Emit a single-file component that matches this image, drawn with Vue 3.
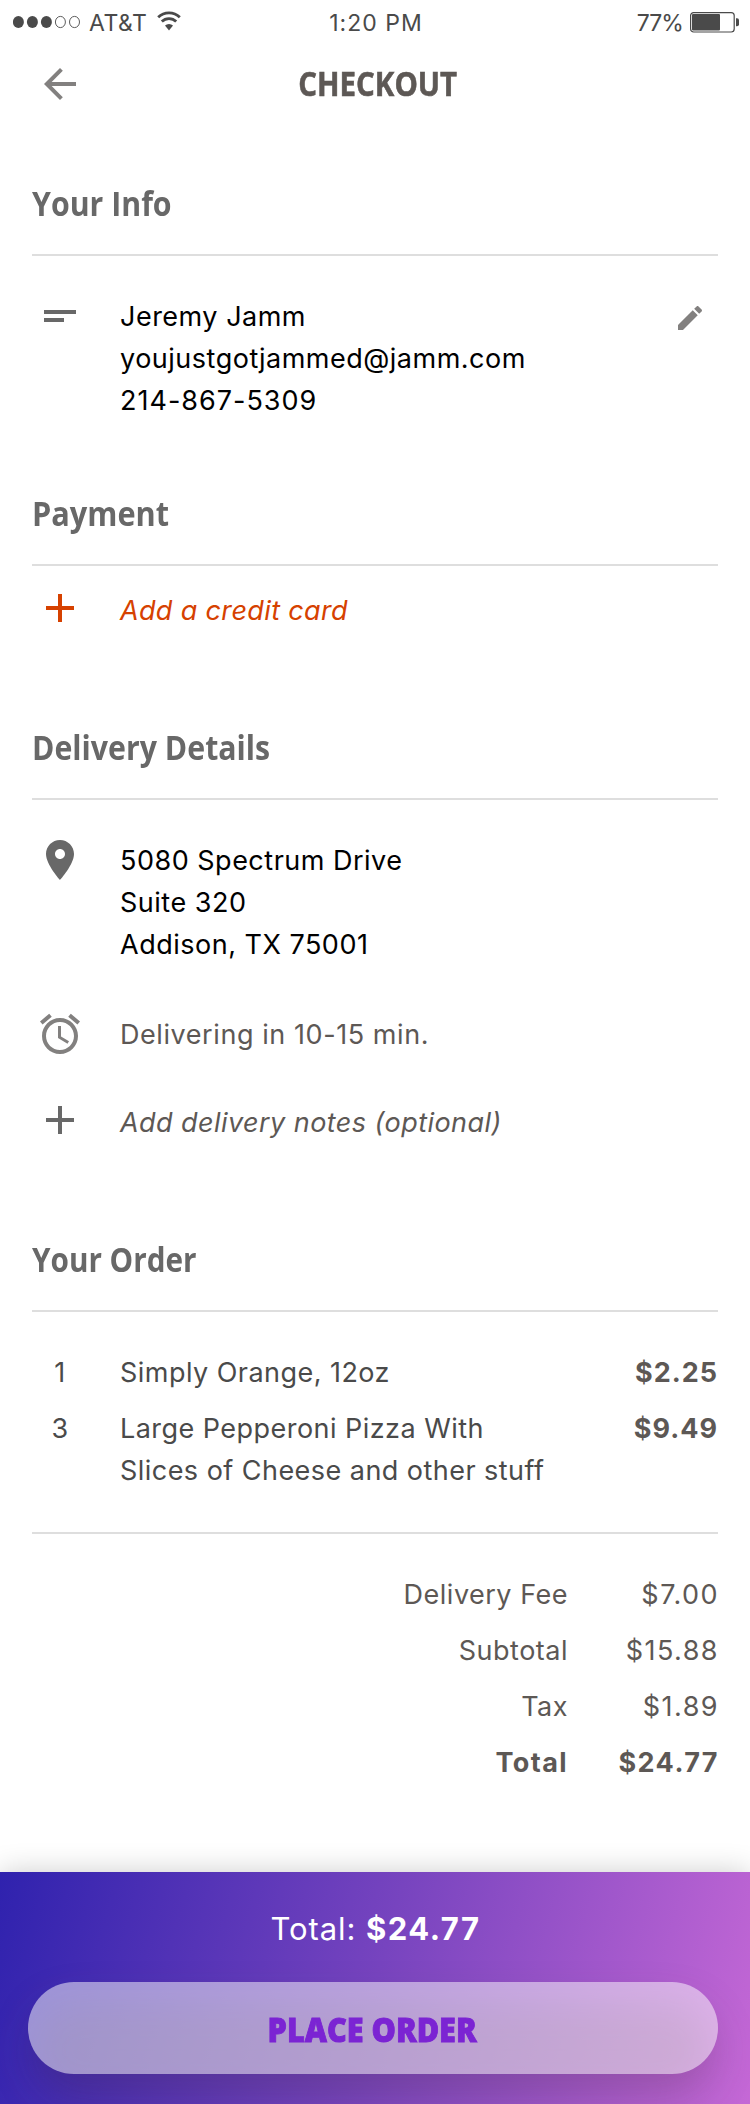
<script setup>
const address = ['5080 Spectrum Drive', 'Suite 320', 'Addison, TX 75001']
const items = [
  { qty: 1, lines: ['Simply Orange, 12oz'], price: '$2.25' },
  { qty: 3, lines: ['Large Pepperoni Pizza With', 'Slices of Cheese and other stuff'], price: '$9.49' },
]
const totals = [
  { label: 'Delivery Fee', amount: '$7.00' },
  { label: 'Subtotal', amount: '$15.88' },
  { label: 'Tax', amount: '$1.89' },
  { label: 'Total', amount: '$24.77', strong: true },
]
</script>

<template>
  <main class="screen">
    <div class="status">
      <div class="carrier">
        <svg class="signal" width="67" height="14" viewBox="0 0 67 14">
          <g fill="#4a4a4a">
            <ellipse cx="5.4" cy="7" rx="5.5" ry="6" /><ellipse cx="19.4" cy="7" rx="5.5" ry="6" /><ellipse cx="33.4" cy="7" rx="5.5" ry="6" />
          </g>
          <g fill="none" stroke="#4a4a4a" stroke-width="0.9">
            <ellipse cx="47.4" cy="7" rx="5" ry="5.6" /><ellipse cx="61.5" cy="7" rx="5" ry="5.6" />
          </g>
        </svg>
        <span>AT&amp;T</span>
        <svg class="wifi" width="24" height="20" viewBox="0 0 24 20">
          <g fill="none" stroke="#4a4a4a" stroke-width="2.8">
            <path d="M1.2 6.3a15.3 15.3 0 0 1 21.6 0" /><path d="M4.8 10.6a10.2 10.2 0 0 1 14.4 0" />
          </g>
          <path fill="#4a4a4a" d="M8 14.6a5.8 5.8 0 0 1 8 0L12 19.4z" />
        </svg>
      </div>
      <span class="clock">1:20 PM</span>
      <div class="power">
        <span class="percent">77%</span>
        <svg width="50" height="21" viewBox="0 0 50 21">
          <rect x="1.6" y="0.6" width="43.6" height="19.4" rx="3" fill="none" stroke="#4a4a4a" stroke-width="1.2" />
          <rect x="3" y="2" width="28" height="16.4" rx="1" fill="#4a4a4a" />
          <path d="M47 6.3h1a2 2 0 0 1 2 2v4a2 2 0 0 1-2 2h-1z" fill="#4a4a4a" />
        </svg>
      </div>
    </div>

    <header class="nav">
      <svg class="icon light" viewBox="0 0 24 24"><path d="M20 11H7.83l5.59-5.59L12 4l-8 8 8 8 1.41-1.41L7.83 13H20v-2z" /></svg>
      <h1><span>CHECKOUT</span></h1>
    </header>

    <section class="info">
      <h2><span>Your Info</span></h2>
      <div class="row">
        <svg class="icon" viewBox="0 0 24 24"><path d="M4 9h16v2H4V9zm0 4h10v2H4v-2z" /></svg>
        <div class="text dark"><p>Jeremy Jamm</p><p>youjustgotjammed@jamm.com</p><p class="phone">214-867-5309</p></div>
        <svg class="edit" viewBox="0 0 24 24"><path d="M3 17.25V21h3.75L17.81 9.94l-3.75-3.75L3 17.25zM20.71 7.04c.39-.39.39-1.02 0-1.41l-2.34-2.34c-.39-.39-1.02-.39-1.41 0l-1.83 1.83 3.75 3.75 1.83-1.83z" /></svg>
      </div>
    </section>

    <section class="payment">
      <h2><span>Payment</span></h2>
      <div class="row add">
        <svg class="icon plus" viewBox="0 0 24 24"><path d="M19 13h-6v6h-2v-6H5v-2h6V5h2v6h6v2z" /></svg>
        <p class="text">Add a credit card</p>
      </div>
    </section>

    <section class="delivery">
      <h2><span>Delivery Details</span></h2>
      <div class="row">
        <svg class="icon" viewBox="0 0 24 24"><path d="M12 2C8.13 2 5 5.13 5 9c0 5.25 7 13 7 13s7-7.75 7-13c0-3.87-3.13-7-7-7zm0 9.5c-1.38 0-2.5-1.12-2.5-2.5s1.12-2.5 2.5-2.5 2.5 1.12 2.5 2.5-1.12 2.5-2.5 2.5z" /></svg>
        <div class="text dark"><p v-for="line in address" :key="line">{{ line }}</p></div>
      </div>
      <div class="row eta">
        <svg class="icon light" viewBox="0 0 24 24"><path d="M22 5.72l-4.6-3.86-1.29 1.53 4.6 3.86L22 5.72zM7.88 3.39L6.6 1.86 2 5.71l1.29 1.53 4.59-3.85zM12.5 8H11v6l4.75 2.85.75-1.23-4-2.37V8zM12 4c-4.97 0-9 4.03-9 9s4.02 9 9 9 9-4.03 9-9-4.03-9-9-9zm0 16c-3.87 0-7-3.13-7-7s3.13-7 7-7 7 3.13 7 7-3.13 7-7 7z" /></svg>
        <p class="text">Delivering in 10-15 min.</p>
      </div>
      <div class="row notes">
        <svg class="icon plus" viewBox="0 0 24 24"><path d="M19 13h-6v6h-2v-6H5v-2h6V5h2v6h6v2z" /></svg>
        <p class="text">Add delivery notes (optional)</p>
      </div>
    </section>

    <section class="order">
      <h2 class="tight"><span>Your Order</span></h2>
      <ul class="items">
        <li v-for="item in items" :key="item.price" class="row">
          <span class="qty">{{ item.qty }}</span>
          <div class="text"><p v-for="line in item.lines" :key="line">{{ line }}</p></div>
          <strong class="price">{{ item.price }}</strong>
        </li>
      </ul>
      <dl class="totals">
        <div v-for="t in totals" :key="t.label" :class="{ strong: t.strong }">
          <dt>{{ t.label }}</dt><dd>{{ t.amount }}</dd>
        </div>
      </dl>
    </section>

    <footer class="bar">
      <p class="due">Total: <strong>$24.77</strong></p>
      <button class="place" type="button"><span>PLACE ORDER</span></button>
    </footer>
  </main>
</template>

<style>
html, body { background: #fff; }
</style>

<style scoped>
.screen { display: flex; flex-direction: column; width: 750px; height: 2104px; overflow: hidden; background: #fff; color: #5d5855; font: 400 27px/42px Inter, "Liberation Sans", sans-serif; letter-spacing: 0.5px; }
h1, h2, p, ul, dl, dd { margin: 0; padding: 0; }
ul { list-style: none; }

.status { display: grid; grid-template-columns: 1fr auto 1fr; height: 44px; padding: 9px 11px 0 13px; box-sizing: border-box; font-size: 23px; line-height: 28px; color: #4a4a4a; }
.carrier { display: flex; align-items: flex-start; }
.signal { margin: 6px 9px 0 0; }
.wifi { margin: 2px 0 0 10px; }
.clock { letter-spacing: 1px; }
.power { display: flex; justify-content: flex-end; }
.percent { margin-right: 6px; letter-spacing: -0.9px; }
.power svg { margin-top: 3px; }

.nav { height: 136px; box-sizing: border-box; padding: 16px 36px 0; display: grid; grid-template-columns: 48px 1fr 48px; }
h1, h2, .place { font-family: "Open Sans", "Noto Sans", sans-serif; font-size: 34px; line-height: 46px; font-weight: 700; letter-spacing: 0; }
h1 span, h2 span, .place span { display: inline-block; }
h1 { text-align: center; padding-left: 5px; }
h1 span { transform: scaleX(0.866); -webkit-text-stroke: 0.6px currentColor; }
h2 { color: #686868; padding-bottom: 28px; border-bottom: 2px solid #dedede; }
h2 span { transform: scaleX(0.891); transform-origin: left; }
h2.tight span { transform: scaleX(0.873); }

.icon { display: block; width: 48px; height: 48px; margin: -4px 0 0 4px; fill: #686868; }
.nav .icon { margin: 0; }
.icon.plus { margin-top: -6px; }
.icon.light { fill: #82807f; }
section { margin: 0 32px; flex: none; }
.row { display: grid; grid-template-columns: 88px 1fr auto; }

.info { height: 310px; }
.info .row { padding-top: 40px; }
.dark { color: #000; }
.phone { letter-spacing: 1px; }
.edit { width: 32px; height: 32px; fill: #82807f; margin: 6px 12px 0 0; }

.payment { height: 234px; }
.payment h2 span { transform: scaleX(0.903); }
.payment .row { padding-top: 24px; }
.add { color: #d64100; font-style: italic; letter-spacing: 0.35px; }
.add .icon { fill: #d64100; }

.delivery { height: 512px; }
.delivery .row { padding-top: 40px; }
.delivery .eta { padding-top: 48px; letter-spacing: 0.57px; }
.delivery .notes { padding-top: 44px; font-style: italic; letter-spacing: 0.44px; }

.order { height: 636px; }
.items { display: grid; gap: 14px; padding: 40px 0; border-bottom: 2px solid #dedede; color: #4a4a4a; letter-spacing: 0.46px; }
.items .row { padding: 0; }
.qty { width: 56px; text-align: center; }
.price { font-weight: 700; color: #5d5855; letter-spacing: 1px; }
.totals { display: grid; gap: 14px; padding-top: 40px; }
.totals div { display: grid; grid-template-columns: 1fr 150px; text-align: right; }
.totals dd { letter-spacing: 1.45px; margin-right: -1px; }
.totals .strong { font-weight: 700; }
.strong dt { letter-spacing: 1.4px; }

.bar { height: 232px; box-sizing: border-box; padding: 38px 32px 0 28px; background: linear-gradient(105deg, #2f22ae 0%, #7744bf 50%, #c568d6 100%); box-shadow: 0 0 28px rgba(0, 0, 0, 0.2); color: #fff; }
.due { font-size: 31px; line-height: 38px; height: 72px; padding-left: 5px; text-align: center; letter-spacing: 0.9px; }
.due strong { font-weight: 700; letter-spacing: 1.5px; }
.place { position: relative; isolation: isolate; display: block; width: 690px; height: 92px; border: 0; padding: 2px 2px 0 0; background: none; color: #7b24d3; font-weight: 800; text-align: center; }
.place span { transform: scaleX(0.9); -webkit-text-stroke: 0.9px currentColor; }
.place::before, .place::after { content: ""; position: absolute; z-index: -1; border-radius: 46px; }
.place::before { inset: 22px 4px -22px; background: rgba(60, 40, 40, 0.21); filter: blur(20px); }
.place::after { inset: 0; background: rgba(255, 255, 255, 0.5); }
</style>
